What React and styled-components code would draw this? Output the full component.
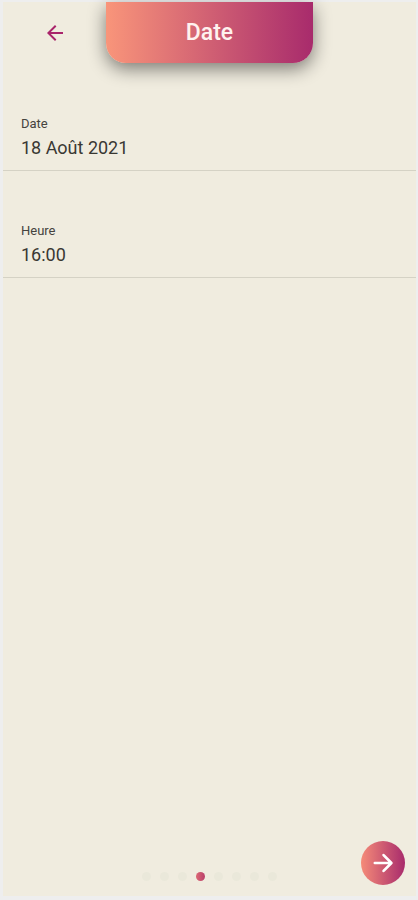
import React, { useState } from "react";
import styled, { createGlobalStyle } from "styled-components";

const GlobalStyle = createGlobalStyle`
  *, *::before, *::after { box-sizing: border-box; }
  body {
    margin: 0;
    background: #eeeeee;
    font-family: Roboto, sans-serif;
  }
`;

const Frame = styled.div`
  min-height: 100vh;
  padding: 2px 2px 4px 3px;
  display: flex;
`;

const Screen = styled.main`
  flex: 1;
  min-width: 0;
  display: flex;
  flex-direction: column;
  background: #f0ecdf;
`;

const Header = styled.header`
  display: grid;
  grid-template-columns: 1fr 2fr 1fr;
`;

const BackButton = styled.button`
  display: flex;
  justify-self: center;
  align-self: center;
  padding: 0;
  border: 0;
  background: none;
  color: #a9246b;
  cursor: pointer;
`;

const Title = styled.h1`
  margin: 0;
  height: 61px;
  display: flex;
  align-items: center;
  justify-content: center;
  border-radius: 0 0 20px 20px;
  background: linear-gradient(90deg, #f9957a, #a82b6c);
  box-shadow: 0 6px 18px rgba(0, 0, 0, 0.48);
  color: #fff2ef;
  font-size: 23px;
  line-height: 28px;
  font-weight: 500;
`;

const Fields = styled.form`
  flex: 1;
  display: flex;
  flex-direction: column;
  gap: 44px;
  padding-top: 45px;
`;

const Field = styled.div`
  display: flex;
  flex-direction: column;
  height: 63px;
  padding: 8px 18px 0;
  border-bottom: 1px solid #d5d2c5;
`;

const Label = styled.label`
  color: #45433e;
  font-size: 13px;
  line-height: 16px;
`;

const Value = styled.input`
  width: 100%;
  height: 24px;
  margin-top: 4px;
  padding: 0;
  border: 0;
  outline: 0;
  background: none;
  color: #3a3833;
  font: 400 18px/24px Roboto, sans-serif;
`;

const Footer = styled.footer`
  display: grid;
  grid-template-columns: 1fr auto 1fr;
  align-items: end;
  padding: 0 11px;
  padding-bottom: 11px;
`;

const Dots = styled.div`
  grid-column: 2;
  display: flex;
  gap: 9px;
  padding-bottom: 4px;
`;

const Dot = styled.span`
  width: 9px;
  height: 9px;
  border-radius: 50%;
  background: ${({ $active }) =>
    $active ? "linear-gradient(90deg, #dc6874, #b93f6b)" : "#eae8da"};
`;

const NextButton = styled.button`
  justify-self: end;
  width: 44px;
  height: 44px;
  display: flex;
  align-items: center;
  justify-content: center;
  padding: 0;
  border: 0;
  border-radius: 50%;
  background: linear-gradient(90deg, #f58b78, #a82b6c);
  color: #ffffff;
  cursor: pointer;
`;

function BackArrow() {
  return (
    <svg width="24" height="24" viewBox="0 0 24 24" fill="currentColor" aria-hidden="true">
      <path d="M20 11H7.83l5.59-5.59L12 4l-8 8 8 8 1.41-1.41L7.83 13H20z" />
    </svg>
  );
}

function NextArrow() {
  return (
    <svg width="28" height="28" viewBox="0 0 24 24" fill="none" stroke="currentColor" strokeWidth="2.3" strokeLinecap="round" strokeLinejoin="round" aria-hidden="true">
      <path d="M5 12H19M12.5 5.2L19.2 12l-6.7 6.8" />
    </svg>
  );
}

const STEPS = 8;
const CURRENT_STEP = 3;

export default function App() {
  const [date, setDate] = useState("18 Août 2021");
  const [time, setTime] = useState("16:00");

  return (
    <Frame>
      <GlobalStyle />
      <Screen>
        <Header>
          <BackButton type="button" aria-label="Retour">
            <BackArrow />
          </BackButton>
          <Title>Date</Title>
        </Header>
        <Fields>
          <Field>
            <Label htmlFor="date">Date</Label>
            <Value id="date" value={date} onChange={(e) => setDate(e.target.value)} />
          </Field>
          <Field>
            <Label htmlFor="time">Heure</Label>
            <Value id="time" value={time} onChange={(e) => setTime(e.target.value)} />
          </Field>
        </Fields>
        <Footer>
          <Dots>
            {Array.from({ length: STEPS }, (_, i) => (
              <Dot key={i} $active={i === CURRENT_STEP} />
            ))}
          </Dots>
          <NextButton type="button" aria-label="Suivant">
            <NextArrow />
          </NextButton>
        </Footer>
      </Screen>
    </Frame>
  );
}
